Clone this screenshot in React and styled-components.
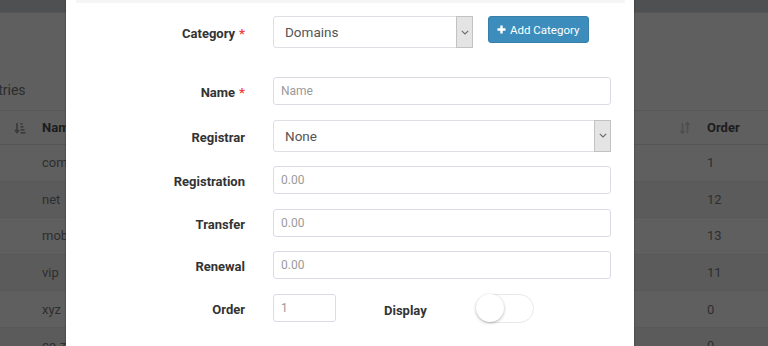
import React from "react";
import styled, { createGlobalStyle } from "styled-components";

const GlobalStyle = createGlobalStyle`
  body {
    margin: 0;
    font-family: Roboto, "Liberation Sans", Arial, sans-serif;
  }
`;

const rows = [
  { name: "com", order: "1" },
  { name: "net", order: "12" },
  { name: "mobi", order: "13" },
  { name: "vip", order: "11" },
  { name: "xyz", order: "0" },
  { name: "co.za", order: "0" },
];

function SortAmountIcon() {
  return (
    <svg width="12" height="12" viewBox="0 0 12 12">
      <path d="M3 1v9M1 8l2 2.5L5 8" stroke="#3a3a3a" strokeWidth="1.6" fill="none" />
      <rect x="6.5" y="1" width="2" height="1.6" fill="#3a3a3a" />
      <rect x="6.5" y="4" width="3" height="1.6" fill="#3a3a3a" />
      <rect x="6.5" y="7" width="4" height="1.6" fill="#3a3a3a" />
      <rect x="6.5" y="10" width="5" height="1.6" fill="#3a3a3a" />
    </svg>
  );
}

function SortIcon() {
  return (
    <svg width="12" height="12" viewBox="0 0 12 12">
      <path d="M3.5 1v10M1.5 9l2 2.3L5.5 9M8.5 11V1M6.5 3l2-2.3L10.5 3" stroke="#4e4e4e" strokeWidth="1.5" fill="none" />
    </svg>
  );
}

function Chevron() {
  return (
    <svg width="8" height="5" viewBox="0 0 8 5">
      <path d="M0.8 0.8L4 4l3.2-3.2" stroke="#6a6a6a" strokeWidth="1.1" fill="none" />
    </svg>
  );
}

function PlusIcon() {
  return (
    <svg width="9" height="9" viewBox="0 0 9 9">
      <path d="M4.5 0.5v8M0.5 4.5h8" stroke="#fff" strokeWidth="2.4" />
    </svg>
  );
}

function Select({ value, width }) {
  return (
    <SelectBox $width={width}>
      <SelectValue>{value}</SelectValue>
      <ArrowBox>
        <Chevron />
      </ArrowBox>
    </SelectBox>
  );
}

function Label({ children, required }) {
  return (
    <FieldLabel>
      {children}
      {required && <Star>*</Star>}
    </FieldLabel>
  );
}

export default function App() {
  return (
    <Screen>
      <GlobalStyle />
      <PageHeader />
      <Entries>entries</Entries>
      <Table>
        <HeadRow>
          <Cell $align="right">
            <SortAmountIcon />
          </Cell>
          <Cell $between>
            <b>Name</b>
            <SortIcon />
          </Cell>
          <Cell>
            <b>Order</b>
          </Cell>
        </HeadRow>
        {rows.map((r, i) => (
          <BodyRow key={r.name} $odd={i % 2 === 0}>
            <Cell />
            <Cell>{r.name}</Cell>
            <Cell>{r.order}</Cell>
          </BodyRow>
        ))}
      </Table>

      <Modal>
        <TopStrip />
        <Form>
          <FieldRow $extra>
            <Label required>Category</Label>
            <Controls>
              <Select value="Domains" width="200px" />
              <AddButton>
                <PlusIcon />
                Add Category
              </AddButton>
            </Controls>
          </FieldRow>
          <FieldRow>
            <Label required>Name</Label>
            <Input placeholder="Name" />
          </FieldRow>
          <FieldRow>
            <Label>Registrar</Label>
            <Select value="None" />
          </FieldRow>
          <FieldRow>
            <Label>Registration</Label>
            <Input placeholder="0.00" />
          </FieldRow>
          <FieldRow>
            <Label>Transfer</Label>
            <Input placeholder="0.00" />
          </FieldRow>
          <FieldRow>
            <Label>Renewal</Label>
            <Input placeholder="0.00" />
          </FieldRow>
          <FieldRow>
            <Label>Order</Label>
            <Controls $center>
              <Input placeholder="1" $width="63px" />
              <InlineLabel>Display</InlineLabel>
              <Toggle>
                <Knob />
              </Toggle>
            </Controls>
          </FieldRow>
        </Form>
      </Modal>
    </Screen>
  );
}

const Screen = styled.div`
  position: relative;
  width: 768px;
  height: 346px;
  overflow: hidden;
  background: #5f5f5f;
  color: #2d2d2d;
  font-size: 13px;
`;

const PageHeader = styled.div`
  height: 12px;
  background: #4f5052;
  border-bottom: 1px solid #555658;
`;

const Entries = styled.div`
  margin: 67px 0 0 -17px;
  height: 20px;
  line-height: 20px;
  font-size: 14px;
  color: #2c2c2c;
`;

const Table = styled.div`
  margin-top: 10px;
  border-top: 1px solid #585858;
`;

const HeadRow = styled.div`
  display: grid;
  grid-template-columns: 34px 665px 1fr;
  height: 33px;
  border-bottom: 1px solid #555;
  color: #1c1c1c;
  font-size: 13px;
`;

const BodyRow = styled(HeadRow)`
  height: 35.6px;
  background: ${(p) => (p.$odd ? "#5f5f5f" : "#5b5b5b")};
  border-bottom: 1px solid #585858;
  color: #2e2e2e;
`;

const Cell = styled.div`
  display: flex;
  align-items: center;
  justify-content: ${(p) =>
    p.$between ? "space-between" : p.$align === "right" ? "flex-end" : "flex-start"};
  padding: 0 8px;
`;

const Modal = styled.div`
  position: absolute;
  top: 0;
  left: 66px;
  width: 568px;
  height: 360px;
  background: #fff;
  box-shadow: 0 0 2px rgba(0, 0, 0, 0.35);
`;

const TopStrip = styled.div`
  height: 3px;
  margin: 0 9px 0 10px;
  background: #f5f5f5;
`;

const Form = styled.div`
  display: flex;
  flex-direction: column;
  gap: 14.5px;
  padding: 13px 23px 0 0;
`;

const FieldRow = styled.div`
  display: grid;
  grid-template-columns: 179px 1fr;
  column-gap: 28px;
  align-items: center;
  margin-bottom: ${(p) => (p.$extra ? "14.5px" : "0")};
`;

const FieldLabel = styled.label`
  text-align: right;
  font-weight: 700;
  font-size: 13px;
  color: #333;
  line-height: 20px;
  margin-top: 4px;
`;

const Star = styled.span`
  color: #f0413a;
  margin-left: 4px;
`;

const InlineLabel = styled(FieldLabel)`
  margin: 5px 49px 0 48px;
`;

const Controls = styled.div`
  display: flex;
  align-items: ${(p) => (p.$center ? "center" : "flex-start")};
  gap: ${(p) => (p.$center ? "0" : "15px")};
`;

const Input = styled.input`
  box-sizing: border-box;
  width: ${(p) => p.$width || "100%"};
  height: 28px;
  border: 1px solid #d9dde3;
  border-radius: 3px;
  padding: 0 7px;
  font-family: inherit;
  font-size: 12px;
  color: #555;
  outline: none;
  &::placeholder {
    color: #9a9a9a;
  }
`;

const SelectBox = styled.div`
  box-sizing: border-box;
  display: flex;
  width: ${(p) => p.$width || "100%"};
  height: 32px;
  border: 1px solid #dcdfe4;
  border-radius: 3px;
  background: #fff;
`;

const SelectValue = styled.div`
  flex: 1;
  display: flex;
  align-items: center;
  padding-left: 11px;
  font-size: 13.5px;
  color: #555;
`;

const ArrowBox = styled.div`
  box-sizing: border-box;
  width: 17px;
  margin: -1px -1px -1px 0;
  display: flex;
  align-items: center;
  justify-content: center;
  background: #e4e4e4;
  border: 1px solid #c2c2c2;
`;

const AddButton = styled.button`
  display: flex;
  align-items: center;
  gap: 4px;
  height: 27px;
  width: 101px;
  padding: 0 0 0 8px;
  background: #3c8dbc;
  border: 1px solid #367fa9;
  border-radius: 3px;
  color: #fff;
  font-family: inherit;
  font-size: 11.5px;
`;

const Toggle = styled.div`
  box-sizing: border-box;
  width: 58px;
  height: 29px;
  border: 1px solid #e8e8e8;
  border-radius: 15px;
  background: #fff;
  display: flex;
  align-items: center;
`;

const Knob = styled.div`
  width: 28px;
  height: 28px;
  margin-left: -1px;
  border-radius: 50%;
  background: #fff;
  box-shadow: 0 1px 3px rgba(0, 0, 0, 0.3);
`;
